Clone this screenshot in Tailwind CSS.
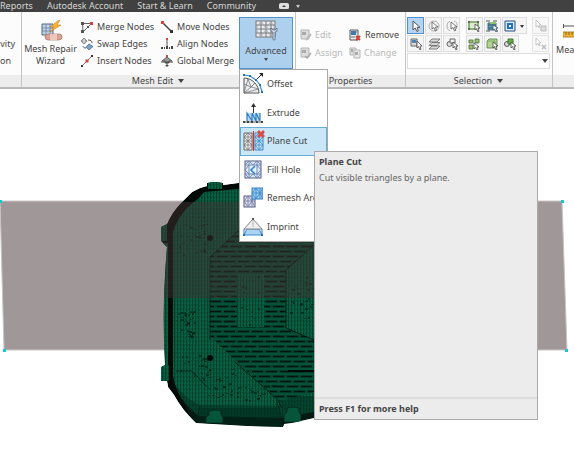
<!DOCTYPE html>
<html lang="en">
<head>
  <meta charset="UTF-8" />
  <meta name="viewport" content="width=device-width, initial-scale=1.0" />
  <title>Mesh Edit</title>
  <script src="https://cdn.jsdelivr.net/npm/@tailwindcss/browser@4"></script>
</head>
<body class="flex min-h-screen flex-col overflow-hidden bg-white font-['Noto_Sans','Open_Sans',sans-serif] text-[9px] leading-3 text-[#444]">

  <!-- menu bar -->
  <nav class="flex h-3 items-center gap-[14px] bg-[#414141] whitespace-nowrap text-[#d6d6d6]">
    <a href="#">Reports</a>
    <a href="#">Autodesk Account</a>
    <a href="#">Start &amp; Learn</a>
    <a href="#">Community</a>
    <button class="ml-2 flex items-center gap-1" aria-label="Display options">
      <svg class="h-2 w-3" viewBox="0 0 12 8"><rect x="1" y="1" width="10" height="6" rx="1.5" fill="#dedede"/><path d="M4 5l2-2 2 2z" fill="#414141"/></svg>
      <svg class="h-2 w-2" viewBox="0 0 8 8"><path d="M2 3h4L4 6z" fill="#ccc"/></svg>
    </button>
  </nav>

  <!-- ribbon -->
  <div class="relative z-10 flex h-[77px] shrink-0 border-b-2 border-[#b9b9b9] bg-[#fcfcfc] whitespace-nowrap">
    <section class="flex w-[22px] shrink-0 flex-col border-r border-[#c4c4c4]">
      <div class="flex flex-1 flex-col items-end gap-[5px] pt-[26px] pr-[6px]">
        <span>vity</span>
        <span class="pr-1">on</span>
      </div>
      <div class="h-3 bg-[#ededed]"></div>
    </section>

    <section class="flex w-[274px] shrink-0 flex-col border-r border-[#c4c4c4]">
      <div class="flex flex-1">
        <button class="flex w-[57px] flex-col items-center pt-2 text-center">
          <svg class="mb-px h-[22px] w-6 shrink-0" viewBox="0 0 24 22">
            <path d="M3 4h11v11H3z" fill="#c6d3e6" stroke="#4b6587"/>
            <path d="M3 8h11M3 11h11M7 4v11M11 4v11" stroke="#64809f" stroke-width=".8"/>
            <path d="M20 0l-9 7h4l-4 5 11-7h-4l3-5z" fill="#fbb42c" stroke="#c6842a" stroke-width=".6"/>
            <rect x="6" y="14" width="17" height="6" rx="3" fill="#d9a294" stroke="#a87567" stroke-width=".7"/>
            <rect x="11" y="14" width="7" height="6" fill="#eec5b8"/>
          </svg>
          <span>Mesh Repair</span>
          <span>Wizard</span>
        </button>
        <div class="grid w-[79px] auto-rows-[17px] content-start pt-[6px] pl-[2px]">
          <button class="flex items-center gap-1">
            <svg class="size-3" viewBox="0 0 12 12"><path d="M1.5 2.500h9L2 11z" fill="none" stroke="#666"/><path d="M0 1h3v3H0zM0 9h3v3H0zM6 5h2v2H6z" fill="#555"/><path d="M9 1h3v3H9z" fill="#d9423a"/></svg>
            Merge Nodes
          </button>
          <button class="flex items-center gap-1">
            <svg class="size-3" viewBox="0 0 12 12"><path d="M3 0l3 3-3 3-3-3z" fill="#aaa" stroke="#666" stroke-width=".7"/><path d="M3 1v4" stroke="#eee"/><path d="M8 6l4 2.500L8 12 5 9z" fill="#7ba0c8" stroke="#3f6691" stroke-width=".7"/><path d="M7 2c3 0 4 1 4 3M5 10c-2 0-3-1-3-2" fill="none" stroke="#555"/></svg>
            Swap Edges
          </button>
          <button class="flex items-center gap-1">
            <svg class="size-3" viewBox="0 0 12 12"><path d="M1 11L11 1" stroke="#777"/><path d="M0 10h2v2H0zM10 0h2v2h-2z" fill="#333"/><path d="M4.500 4.500h3v3h-3z" fill="#d9423a"/></svg>
            Insert Nodes
          </button>
        </div>
        <div class="grid w-[80px] auto-rows-[17px] content-start pt-[6px] pl-[3px]">
          <button class="flex items-center gap-1">
            <svg class="size-3" viewBox="0 0 12 12"><path d="M1 1l9 9" stroke="#444" stroke-width="1.5"/><path d="M0 0h3v3H0z" fill="#d9423a"/><path d="M9 9h3v3H9z" fill="#333"/></svg>
            Move Nodes
          </button>
          <button class="flex items-center gap-1">
            <svg class="size-3" viewBox="0 0 12 12"><path d="M6 2v8" stroke="#555"/><path d="M0 9h2v2H0zM3 9h1v2H3zM5 8h2v3H5zM10 8h2v3h-2zM8 9h1v2H8z" fill="#444"/><path d="M5 0h2v2H5z" fill="#d9423a"/></svg>
            Align Nodes
          </button>
          <button class="flex items-center gap-1">
            <svg class="size-3" viewBox="0 0 12 12"><path d="M6 2L1 6h3v2h4V6h3z" fill="#999" stroke="#444" stroke-width=".8"/><path d="M0 7h12M6 7v4" stroke="#444"/><path d="M4 10h4l-2 2z" fill="#444"/><path d="M5 0h2v2H5z" fill="#d9423a"/></svg>
            Global Merge
          </button>
        </div>
        <!-- advanced drop-down -->
        <div class="relative mt-[5px] ml-px h-[52px] w-[54px]">
          <button class="flex h-full w-full flex-col items-center border border-[#4f91cc] bg-[#aed0ef] pt-px" aria-haspopup="true" aria-expanded="true">
            <svg class="h-[22px] w-6 shrink-0" viewBox="0 0 24 22">
              <rect x="2" y="2" width="19" height="16" fill="#e9edf2" stroke="#777"/>
              <path d="M2 6h19M2 10h19M2 14h19M7 2v16M12 2v16M17 2v16" stroke="#777"/>
              <path d="M2 10l5-8 5 8 5-8 4 8M2 10l5 8 5-8 5 8 4-8" fill="none" stroke="#a0a4aa" stroke-width=".7"/>
              <path d="M17 9v3l2 1v7a1 1 0 002 0v-7l2-1V9l-2 2h-2z" fill="#dfe5ec" stroke="#4f6680" stroke-width=".8"/>
            </svg>
            <span class="mt-1">Advanced</span>
            <svg class="h-1 w-1 shrink-0" viewBox="0 0 4 4"><path d="M0 1h4L2 4z" fill="#444"/></svg>
          </button>
          <div class="absolute top-full left-0 flex h-[173px] w-[89px] flex-col border border-[#a9a9a9] bg-white" role="menu">
            <button class="flex flex-1 items-center gap-1 pl-[3px]" role="menuitem">
              <svg class="h-[22px] w-5" viewBox="0 0 20 22"><path d="M1 20V5c8 0 15 7 15 15z" fill="#eef1f4" stroke="#555"/><path d="M1 20L5 6l3 8 4-4-4 4 8 2-15 4 7-6-7-3" fill="none" stroke="#777" stroke-width=".8"/><path d="M1 2l6 1 6 4 4 5 2 7" fill="none" stroke="#3c8bcb" stroke-width="1.2"/><path d="M0 1h2v2H0zM6 2h2v2H6zM12 6h2v2h-2zM16 11h2v2h-2zM18 18h2v2h-2z" fill="#2873b4"/><path d="M14 6l4-4" stroke="#222"/><path d="M16 0h4v4z" fill="#222"/></svg>
              Offset
            </button>
            <button class="flex flex-1 items-center gap-1 pl-[3px]" role="menuitem">
              <svg class="h-[22px] w-5" viewBox="0 0 20 22"><path d="M4 11h13v8H4z" fill="#b9d9f2"/><path d="M4 19v-8l5 8v-8M9 11l4 8v-8l4 8v-8" fill="none" stroke="#2f7fc0" stroke-width="1.2"/><path d="M0 20h20" stroke="#555"/><path d="M0 19h2v2H0zM4 19h2v2H4zM8 19h2v2H8zM13 19h2v2h-2zM18 19h2v2h-2z" fill="#444"/><path d="M10.500 4v7" stroke="#333"/><path d="M8 5h5l-2.500-4z" fill="#333"/></svg>
              Extrude
            </button>
            <div class="relative flex flex-1">
              <button class="flex w-full items-center gap-[2px] border border-[#67acd9] bg-[#c9e7f7] pl-[2px]" role="menuitem" aria-describedby="planeCutTip">
                <svg class="h-[22px] w-[22px]" viewBox="0 0 22 22"><path d="M1 3h8v17H1z" fill="#f1eef0" stroke="#666"/><path d="M1 7h8M1 11h8M1 15h8M5 3v17M1 7l4-4 4 4-4 4-4-4M1 15l4-4 4 4-4 5-4-5" fill="none" stroke="#777" stroke-width=".8"/><path d="M12 3h8v17h-8z" fill="#c7e2f6" stroke="#3c8bcb"/><path d="M12 7h8M12 11h8M12 15h8M16 3v17M12 7l4-4 4 4-4 4-4-4M12 15l4-4 4 4-4 5-4-5" fill="none" stroke="#3c8bcb" stroke-width=".8"/><path d="M10.500 1v20" stroke="#c33" stroke-width="1.2"/><path d="M15 1l6 6M21 1l-6 6" stroke="#e04a42" stroke-width="2.8"/></svg>
                Plane Cut
              </button>
              <!-- tooltip of the hovered entry -->
              <div id="planeCutTip" class="absolute top-6 left-[74px] flex h-[269px] w-[224px] flex-col border border-[#aaa] bg-[#ececec]" role="tooltip">
                <div class="flex-1 px-1 pt-1">
                  <p class="font-bold">Plane Cut</p>
                  <p class="mt-1 text-[#666]">Cut visible triangles by a plane.</p>
                </div>
                <p class="border-t-2 border-[#ddd] px-1 py-1 font-bold">Press F1 for more help</p>
              </div>
            </div>
            <button class="flex flex-1 items-center gap-1 pl-[3px]" role="menuitem">
              <svg class="h-[22px] w-5" viewBox="0 0 20 22"><rect x="2" y="2" width="16" height="17" fill="#dce9f7" stroke="#555b80"/><path d="M2 6l4-4 4 4 4-4 4 4M2 11l4-5M18 11l-4-5M2 15l4 4 4-4 4 4 4-4M2 11l4 4M18 11l-4 4M2 6h16M2 15h16M6 2v17M14 2v17" fill="none" stroke="#6c84b0" stroke-width=".9"/><path d="M7 7h6v7H7z" fill="#e3f0fc"/><path d="M12 7l-4 4 4 4" fill="none" stroke="#2f7fc0" stroke-width="1.5"/></svg>
              Fill Hole
            </button>
            <button class="flex flex-1 items-center gap-1 pl-[3px]" role="menuitem">
              <svg class="h-[22px] w-5" viewBox="0 0 20 22"><rect x="1" y="9" width="11" height="11" fill="#dcdfee" stroke="#555b80"/><path d="M1 14h11M5 9v11M9 9v11M1 14l4-5 4 5 3-5M1 14l4 6 4-6 3 6" fill="none" stroke="#7a80a8" stroke-width=".9"/><rect x="9" y="1" width="11" height="11" fill="#9fcbee" stroke="#2f7fc0"/><path d="M9 6h11M13 1v11M17 1v11M9 6l4-5 4 5 3-5M9 6l4 6 4-6 3 6" fill="none" stroke="#3c8bcb" stroke-width=".9"/></svg>
              Remesh Area
            </button>
            <button class="flex flex-1 items-center gap-1 pl-[3px]" role="menuitem">
              <svg class="h-[22px] w-5" viewBox="0 0 20 22"><path d="M4 13h12l3 6H1z" fill="#a9d5f3" stroke="#3c8bcb"/><path d="M10 3L1 13h18z" fill="#eee" stroke="#888"/><path d="M10 3v8" stroke="#bbb"/><path d="M1 13v6M19 13v6" stroke="#2873b4"/><path d="M9 2h2v2H9z" fill="#555"/><path d="M0 18h2v2H0zM18 18h2v2h-2z" fill="#2873b4"/></svg>
              Imprint
            </button>
          </div>
        </div>
      </div>
      <button class="flex h-3 items-center justify-center gap-1 bg-[#ededed]">
        Mesh Edit
        <svg class="h-2 w-2" viewBox="0 0 8 8"><path d="M1 2h6L4 6z" fill="#444"/></svg>
      </button>
    </section>

    <section class="flex w-[110px] shrink-0 flex-col border-r border-[#c4c4c4]">
      <div class="grid flex-1 auto-rows-[18px] grid-cols-[46px_1fr] content-start gap-x-[3px] pt-[14px] pl-1">
        <button class="flex items-center gap-[3px] text-[#b8b8b8]" disabled>
          <svg class="size-3" viewBox="0 0 12 12"><path d="M1 1h8v9H1z" fill="#ddd" stroke="#b5b5b5"/><path d="M2 3h4v3H2z" fill="#aaa"/><path d="M6 11l5-6" stroke="#bbb" stroke-width="2"/></svg>
          Edit
        </button>
        <button class="flex items-center gap-1">
          <svg class="size-3" viewBox="0 0 12 12"><path d="M1 1h8v10H1z" fill="#eee" stroke="#555"/><path d="M2 2h5v4H2z" fill="#3f78ad"/><path d="M2 8h4M7 3h1" stroke="#666"/><path d="M7 7l4 4M11 7l-4 4" stroke="#d33b33" stroke-width="1.800"/></svg>
          Remove
        </button>
        <button class="flex items-center gap-[3px] text-[#b8b8b8]" disabled>
          <svg class="size-3" viewBox="0 0 12 12"><path d="M1 1h8v9H1z" fill="#ddd" stroke="#b5b5b5"/><path d="M2 3h4v3H2z" fill="#aaa"/><path d="M5 9l2 2 4-5" fill="none" stroke="#aaa" stroke-width="1.5"/></svg>
          Assign
        </button>
        <button class="flex items-center gap-[3px] text-[#b8b8b8]" disabled>
          <svg class="size-3" viewBox="0 0 12 12"><path d="M1 1h6v7H1z" fill="#ddd" stroke="#b5b5b5"/><path d="M5 3h6v8H5z" fill="#e8e8e8" stroke="#b5b5b5"/><path d="M6 5h3v3H6zM2 2h2v3H2z" fill="#aaa"/></svg>
          Change
        </button>
      </div>
      <div class="flex h-3 items-center justify-center bg-[#ededed]">Properties</div>
    </section>

    <section class="flex w-[147px] shrink-0 flex-col border-r border-[#c4c4c4]">
      <div class="flex-1 px-px pt-[5px]">
        <div class="flex justify-between pr-[2px]">
          <div class="grid grid-cols-3 gap-px">
            <button class="flex size-[17px] items-center justify-center border border-[#4f91cc] bg-[#b4d4f1]" aria-label="Select"><svg class="size-3" viewBox="0 0 12 12"><path d="M3 1v9l2.200-2L7 11.500l1.400-.7L7 7.400h3z" fill="#fff" stroke="#444" stroke-width=".9"/></svg></button>
            <button class="flex size-[17px] items-center justify-center border border-[#ddd] bg-[#f5f5f5]" aria-label="Circle select"><svg class="size-3" viewBox="0 0 12 12"><circle cx="6" cy="6" r="5" fill="none" stroke="#aaa"/><path d="M4 2v7l2-1.500L7.500 11l1.200-.6L7.500 7H10z" fill="#fff" stroke="#555" stroke-width=".8"/></svg></button>
            <button class="flex size-[17px] items-center justify-center border border-[#ddd] bg-[#f5f5f5]" aria-label="Polygon select"><svg class="size-3" viewBox="0 0 12 12"><path d="M4 1C0 3 0 9 4 11M8 1c4 1 4 7 1 9" fill="none" stroke="#aaa"/><path d="M5 2v7l2-1.500L8.500 11l1.200-.6L8.500 7H11z" fill="#fff" stroke="#555" stroke-width=".8"/></svg></button>
            <button class="flex size-[17px] items-center justify-center border border-[#ddd] bg-[#f5f5f5]" aria-label="Select by properties"><svg class="size-3" viewBox="0 0 12 12"><path d="M1 1h6v7H1z" fill="#ddd" stroke="#666"/><path d="M2 2h4v3H2z" fill="#4d84b8"/><path d="M7 3v7l1.500-1.500L10 12l1-.6L10 8h2z" fill="#fff" stroke="#444" stroke-width=".8"/></svg></button>
            <button class="flex size-[17px] items-center justify-center border border-[#ddd] bg-[#f5f5f5]" aria-label="Select by layer"><svg class="size-3" viewBox="0 0 12 12"><path d="M4 1h8L9 4H1zM4 4.500h8L9 7.500H1zM4 8h8l-3 3H1z" fill="#d8d8d8" stroke="#666" stroke-width=".8"/></svg></button>
            <button class="flex size-[17px] items-center justify-center border border-[#ddd] bg-[#f5f5f5]" aria-label="Select connected"><svg class="size-3" viewBox="0 0 12 12"><circle cx="3.500" cy="6" r="2.500" fill="#ddd" stroke="#666"/><path d="M4 1h5v4H4z" fill="#eee" stroke="#666"/><path d="M7 4v6l1.500-1.500L10 12l1-.6L10 8h2z" fill="#fff" stroke="#444" stroke-width=".8"/></svg></button>
          </div>
          <div class="grid grid-cols-[17px_17px_25px] gap-px">
            <button class="flex size-[17px] items-center justify-center border border-[#ddd] bg-[#f5f5f5]" aria-label="Window select"><svg class="size-3" viewBox="0 0 12 12"><path d="M1 2h9v7H1z" fill="#dcebd2" stroke="#6f9c50" stroke-width="1.500"/><path d="M0 1h2v2H0zM9 1h2v2H9zM0 8h2v2H0z" fill="#666"/><path d="M7 4v6l1.500-1.500L10 12l1-.6L10 8h2z" fill="#fff" stroke="#444" stroke-width=".8"/></svg></button>
            <button class="flex size-[17px] items-center justify-center border border-[#ddd] bg-[#f5f5f5]" aria-label="Expand selection"><svg class="size-3" viewBox="0 0 12 12"><path d="M2 3h8v7H2z" fill="#4d96c9" stroke="#4a6c80"/><path d="M0 1h4M7 1h4M0 11h4M9 11h3M2 5h8M2 8h8" stroke="#4a5c50"/><path d="M4 2h6v2H4z" fill="#8cc36a"/><path d="M7 5v5l1.500-1L10 12l1-.6L10 8h2z" fill="#fff" stroke="#456" stroke-width=".8"/></svg></button>
            <button class="flex h-[17px] w-[25px] items-center justify-center gap-1 border border-[#ddd] bg-[#f5f5f5]" aria-label="Selection mode"><svg class="size-3" viewBox="0 0 12 12"><path d="M1 1h10v10H1z" fill="#d8ebfa" stroke="#2a4f78"/><path d="M4 4h4v4H4z" fill="#fff" stroke="#1f72bd" stroke-width="2"/></svg><svg class="size-1" viewBox="0 0 4 4"><path d="M0 1h4L2 4z" fill="#333"/></svg></button>
            <button class="flex size-[17px] items-center justify-center border border-[#ddd] bg-[#f5f5f5]" aria-label="Invert selection"><svg class="size-3" viewBox="0 0 12 12"><path d="M1 2h4v3H1zM1 7h4v4H1zM7 1h4v4H7z" fill="#94c26f" stroke="#4d6d38" stroke-width=".8"/><path d="M6 5v6l1.500-1.500L9 12l1-.6L9 9h2z" fill="#fff" stroke="#444" stroke-width=".8"/></svg></button>
            <button class="flex size-[17px] items-center justify-center border border-[#ddd] bg-[#f5f5f5]" aria-label="Select body"><svg class="size-3" viewBox="0 0 12 12"><path d="M1 3l2-2h8v7l-2 2H1z" fill="#b2d594" stroke="#587a40" stroke-width=".8"/><path d="M1 3h8v7" fill="none" stroke="#7fa562"/><path d="M7 4v6l1.500-1.500L10 12l1-.6L10 8h2z" fill="#fff" stroke="#444" stroke-width=".8"/></svg></button>
            <button class="flex size-[17px] items-center justify-center border border-[#ddd] bg-[#f5f5f5]" aria-label="Select facing"><svg class="size-3" viewBox="0 0 12 12"><circle cx="3" cy="6" r="2.500" fill="#ddd" stroke="#555"/><path d="M4 1h5v5H4z" fill="#62ae45" stroke="#3d7a28"/><path d="M7 4v6l1.500-1.500L10 12l1-.6L10 8h2z" fill="#fff" stroke="#444" stroke-width=".8"/></svg></button>
          </div>
          <div class="grid gap-px">
            <button class="flex size-[17px] items-center justify-center border border-[#e4e4e4] bg-[#f8f8f8]" aria-label="Save selection" disabled><svg class="size-3" viewBox="0 0 12 12"><path d="M1 0v7l2-1.500L4 8l1-.6L4 5h2z" fill="#fff" stroke="#bbb" stroke-width=".8"/><path d="M6 6h5v5H6z" fill="#ddd" stroke="#bbb"/></svg></button>
            <button class="flex size-[17px] items-center justify-center border border-[#e4e4e4] bg-[#f8f8f8]" aria-label="Delete selection" disabled><svg class="size-3" viewBox="0 0 12 12"><path d="M1 0v7l2-1.500L4 8l1-.6L4 5h2z" fill="#fff" stroke="#bbb" stroke-width=".8"/><path d="M7 7l4 4M11 7l-4 4" stroke="#bbb" stroke-width="1.5"/></svg></button>
          </div>
        </div>
        <div class="relative mt-px w-[143px]">
          <select class="block h-4 w-full appearance-none border border-[#ddd] bg-white" aria-label="Saved selections"><option></option></select>
          <svg class="pointer-events-none absolute top-1 right-px h-2 w-2" viewBox="0 0 8 8"><path d="M1 2h6L4 6z" fill="#444"/></svg>
        </div>
      </div>
      <button class="flex h-3 items-center justify-center gap-1 bg-[#ededed]">
        Selection
        <svg class="h-2 w-2" viewBox="0 0 8 8"><path d="M1 2h6L4 6z" fill="#444"/></svg>
      </button>
    </section>

    <section class="flex min-w-0 flex-1 flex-col overflow-hidden">
      <button class="flex flex-1 flex-col items-start pt-[11px] pl-[3px]">
        <svg class="ml-[7px] h-[18px] w-6 shrink-0" viewBox="0 0 24 18"><path d="M0 3h24M.5 1v4" stroke="#555"/><path d="M0 9h24v5H0z" fill="#f1b434" stroke="#b5832a"/><path d="M3 9v3M6 9v3M9 9v3M12 9v3" stroke="#8a611a"/></svg>
        <span class="mt-[3px]">Measure</span>
      </button>
      <div class="h-3 shrink-0 bg-[#ededed]"></div>
    </section>
  </div>

  <!-- viewport -->
  <main class="flex-1 overflow-hidden bg-white">
    <svg class="block h-[370px] w-full" viewBox="0 89 574 370" preserveAspectRatio="xMinYMin slice" role="img" aria-label="Meshed part with cutting plane">
      <defs>
        <pattern id="mesh" width="3" height="4" patternUnits="userSpaceOnUse">
          <rect width="3" height="4" fill="#076545"/>
          <path d="M.7 0v4" stroke="#033524"/>
          <path d="M0 4L3 0" stroke="#044a33" stroke-width=".8"/>
        </pattern>
        <pattern id="slots" width="14" height="10" patternUnits="userSpaceOnUse">
          <path d="M0 1.500h11M0 6.500h4M7 6.500h7" stroke="#01140d" stroke-width="1.600"/>
          <path d="M0 4h14M0 9h14" stroke="#086345" stroke-width=".8"/>
        </pattern>
        <path id="outline" d="M207 186v-3q8-2 16 0v2l15-2h90v235h-14l-22 5-8 1-1 3-36-1-51-3q-14-13-22-28l-6-8-1-6h-6v-14l4-2q-2-33-1-67 1-28 3-51l-6-6v-14l6-3q5-12 15-22l10-10 8-4z"/>
        <clipPath id="partClip"><use href="#outline"/></clipPath>
      </defs>
      <path d="M0 201H562L567 350H4z" fill="#a09898" stroke="#c9c5c5"/>
      <g clip-path="url(#partClip)">
        <use href="#outline" fill="#020a07"/>
        <path d="M161 224h6v17h-6zM161 365h8v16h-8zM163 243h5v122h-5zM208 181h14v8h-14z" fill="url(#mesh)"/>
        <path d="M204 192l34-3h90v220l-44 9-86-2-12-12q-10-11-13-28V232q6-20 25-33z" fill="url(#mesh)"/>
        <path d="M170 376q10 20 30 29l82 1-5-8 5-2h46v32H196z" fill="#022a1c" fill-opacity=".5"/>
        <path d="M196 423l5-15h76l8 20z" fill="#022a1c" fill-opacity=".4"/>
        <path d="M176 371h16l16 17M200 406l-4 16M277 402l7 24" fill="none" stroke="#021a12" stroke-width=".8"/>
        <path d="M210 257l28-26h76v14l-28 25v58l28 12v52l-34 9-45-41-25-24z" fill="#044530"/>
        <path d="M210 257l28-26h76v14l-28 25v58l28 12v52l-34 9-45-41-25-24z" fill="url(#slots)"/>
        <path d="M210 340v-83l28-26M314 245l-28 25v58l28 12M235 362l42 37 5 9" fill="none" stroke="#01100a" stroke-width=".8"/>
        <path d="M237 274h27v53h-27z" fill="url(#mesh)"/>
        <path d="M288 371h26" stroke="#000a06" stroke-width="2"/>
        <circle cx="210" cy="238" r="3" fill="#010806"/>
        <circle cx="210" cy="358" r="3" fill="#010806"/>
        <path d="M209 411q6-2 12 0v4l2 2v6h-17v-6l3-2zM287 408q6-2 12 0v4l2 3v7h-17v-7l3-3z" fill="#06543a" stroke="#01140d" stroke-width=".6"/>
        <g id="specks" fill="#01140d" fill-opacity=".5"></g>
        <path d="M150 202h178v96H150z" fill="#423232" fill-opacity=".5"/>
      </g>
      <path d="M0 200h2v3H0zM561 200h3v3h-3zM3 349h3v3H3zM565 349h3v3h-3z" fill="#17c8cf"/>
    </svg>
  </main>

  <script>
    // dense triangle clusters on the part: [x, y, width, height, count]
    const clusters = [
      [178, 215, 28, 40, 40],
      [178, 310, 16, 28, 40],
      [180, 355, 30, 25, 25],
      [205, 368, 30, 32, 30],
      [290, 275, 24, 45, 30],
      [240, 275, 20, 50, 15],
      [235, 385, 40, 15, 25],
    ];
    let seed = 7;
    function rand() {
      seed = (seed * 16807) % 2147483647;
      return seed / 2147483647;
    }
    let marks = '';
    clusters.forEach(([x, y, w, h, n]) => {
      for (let i = 0; i < n; i++) {
        const px = Math.round(x + rand() * w);
        const py = Math.round(y + rand() * h);
        marks += `<rect x="${px}" y="${py}" width="${1 + Math.round(rand() * 2)}" height="${1 + Math.round(rand())}" />`;
      }
    });
    document.getElementById('specks').innerHTML = marks;
  </script>
</body>
</html>
